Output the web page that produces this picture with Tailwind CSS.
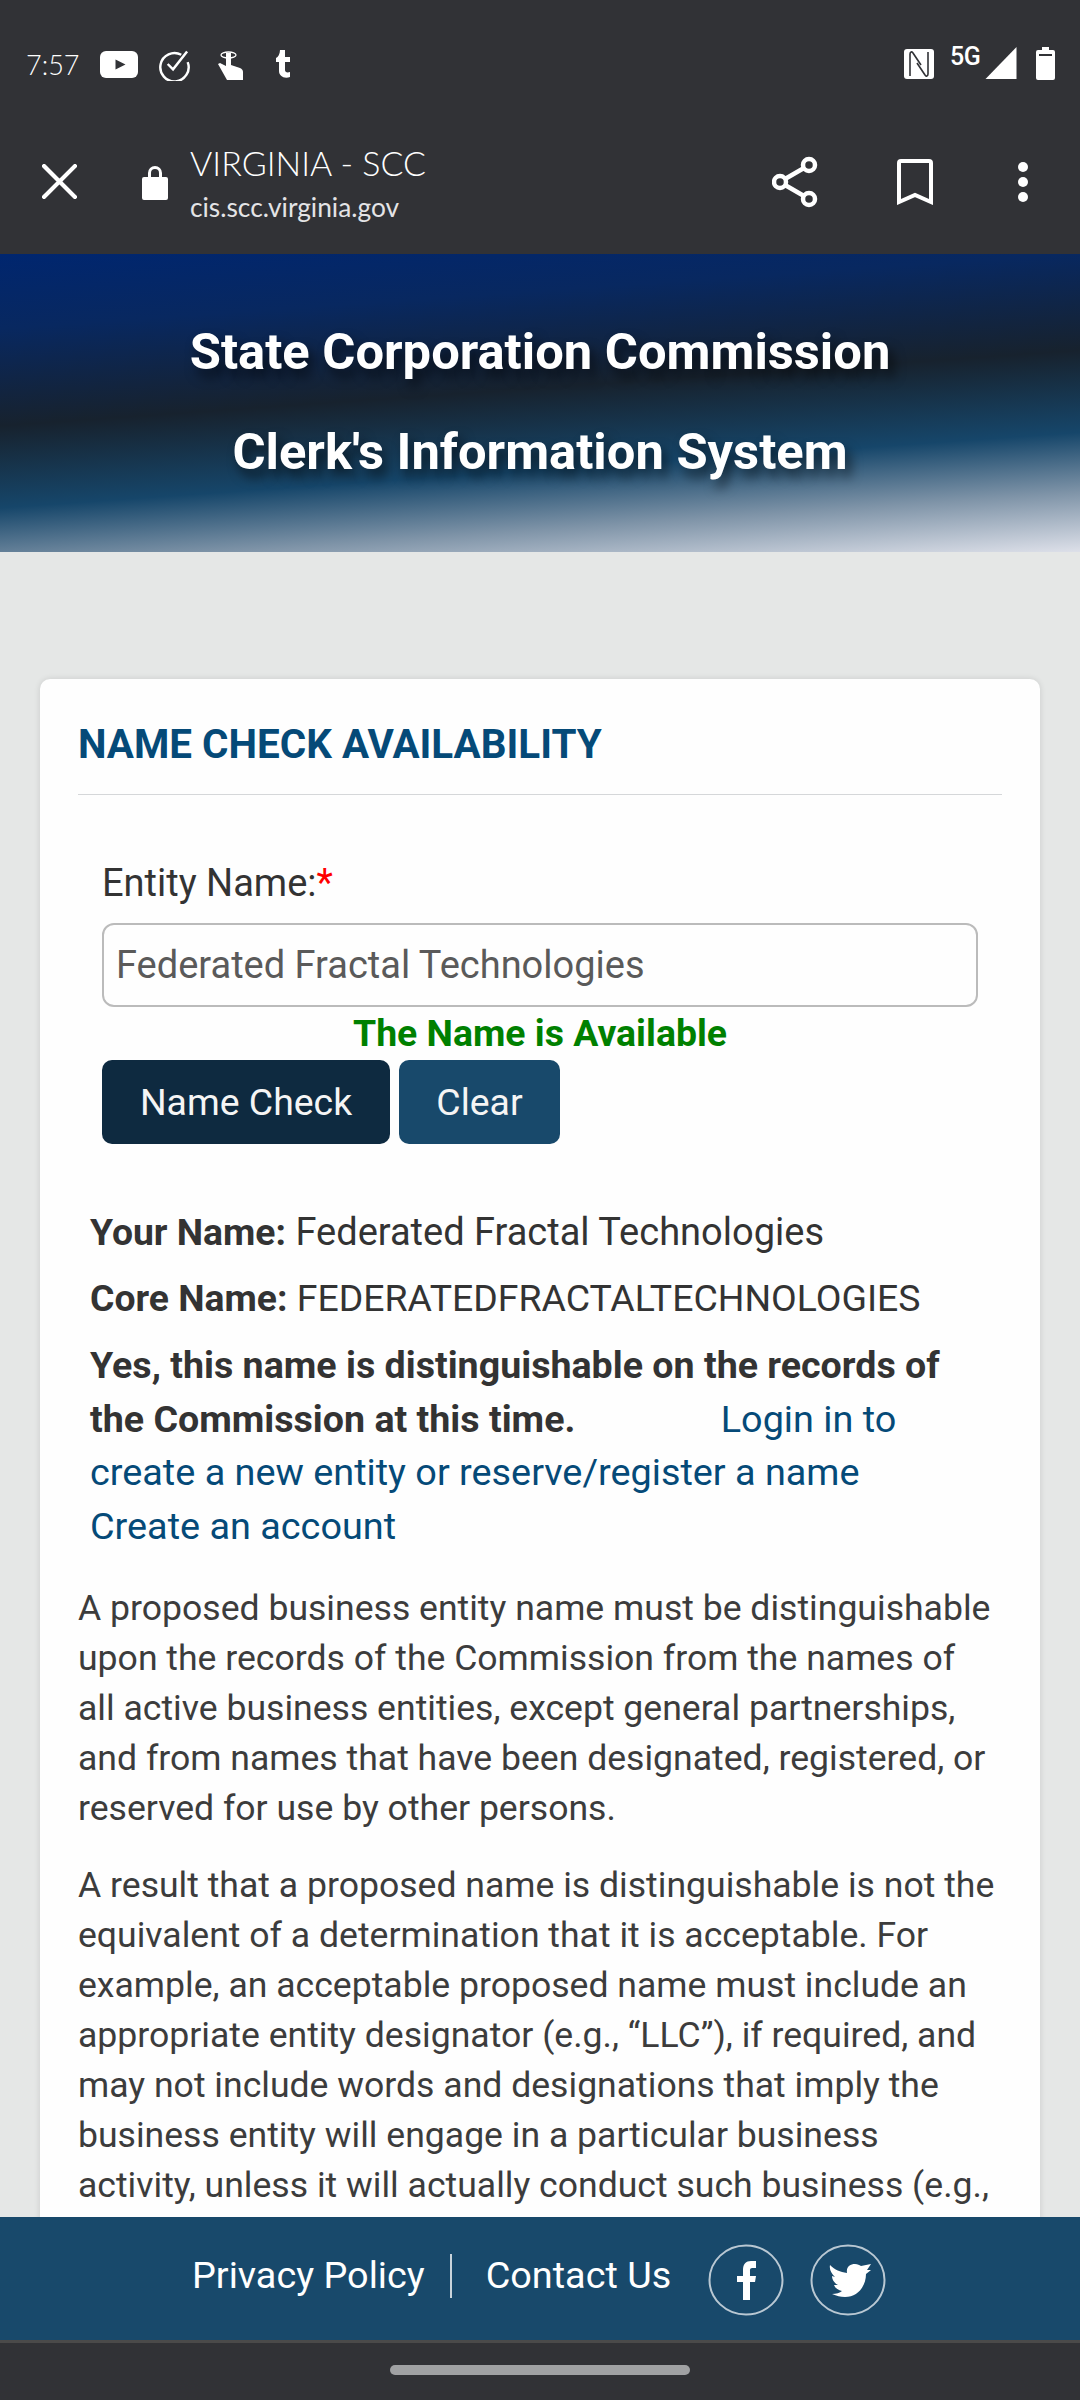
<!DOCTYPE html>
<html lang="en">
<head>
  <meta charset="UTF-8" />
  <meta name="viewport" content="width=device-width, initial-scale=1.0" />
  <title>Virginia SCC - Name Check</title>
  <script src="https://cdn.jsdelivr.net/npm/@tailwindcss/browser@4"></script>
</head>
<body class="m-0 font-['Roboto',sans-serif]">
  <div class="w-[1080px] h-[2400px] flex flex-col overflow-hidden bg-[#e5e7e6]">

    <!-- Status bar -->
    <div class="h-[126px] shrink-0 bg-[#313236] text-white flex items-start pt-[47px] pl-[26px] pr-[25px]">
      <span class="font-['Lato',sans-serif] font-light text-[27px] leading-[34px] w-[74px] mt-[1px]">7:57</span>
      <svg class="w-[38px] h-[27px] mt-[4px]" viewBox="0 0 38 27"><rect width="38" height="27" rx="6" fill="#fff"/><path d="M15.500 8.500l10 5-10 5z" fill="#313236"/></svg>
      <svg class="w-[32px] h-[33px] ml-[20px] mt-[1px]" viewBox="0 0 33 33" fill="none" stroke="#fff" stroke-width="2.500"><path d="M24 6.500A14.600 14.600 0 1 0 30.600 14"/><path d="M10 16l5.500 5.500L30 3"/></svg>
      <svg class="w-[26px] h-[30px] ml-[28px] mt-[3px]" viewBox="0 0 26 30" fill="#fff"><path d="M8 3h5v12l9 3c2 1 3 2 3 4v8H9L0 14l2-1 6 3z"/><ellipse cx="10.500" cy="5" rx="7.500" ry="3" fill="none" stroke="#fff" stroke-width="1.300"/></svg>
      <svg class="w-[15px] h-[28px] ml-[32px] mt-[3px]" viewBox="0 0 15 28" fill="#fff"><path d="M4 0h5v7h5v5H9v8c0 2 2 3 5 2v5c-6 2-11-1-11-6v-9H0V8c2-1 4-4 4-8z"/></svg>
      <div class="flex-1"></div>
      <svg class="w-[30px] h-[30px] mt-[2px]" viewBox="0 0 30 30"><rect width="30" height="30" rx="3" fill="#fff"/><path d="M6 27V5c0-2 2-3 3-1l8 12M24 3v22c0 2-2 3-3 1l-8-12" fill="none" stroke="#313236" stroke-width="1.600"/></svg>
      <span class="text-[25px] leading-[20px] font-medium w-[28px] ml-[16px] tracking-[-0.5px]">5G</span>
      <svg class="w-[32px] h-[32px] ml-[7px]" viewBox="0 0 31 32" fill="#fff"><path d="M31 0v32H0z"/></svg>
      <svg class="w-[19px] h-[33px] ml-[19px]" viewBox="0 0 19 33" fill="#fff"><path fill-rule="evenodd" d="M6 0h7v3h4a2 2 0 0 1 2 2v26a2 2 0 0 1-2 2H2a2 2 0 0 1-2-2V5a2 2 0 0 1 2-2h4zM3 7v2h13V7z"/></svg>
    </div>

    <!-- Browser toolbar -->
    <div class="h-[128px] shrink-0 bg-[#313236] text-white flex items-center pl-[42px] pr-[52px]">
      <svg class="w-[35px] h-[35px] -mt-[17px]" viewBox="0 0 34 34" stroke="#fff" stroke-width="4" stroke-linecap="square"><path d="M2 2l30 30M32 2L2 32"/></svg>
      <svg class="w-[28px] h-[36px] ml-[64px] -mt-[16px]" viewBox="0 0 26 36" fill="#fff"><path d="M6 13V9a7 7 0 0 1 14 0v4h4a2 2 0 0 1 2 2v19a2 2 0 0 1-2 2H2a2 2 0 0 1-2-2V15a2 2 0 0 1 2-2zm3 0h8V9a4 4 0 0 0-8 0z"/></svg>
      <div class="ml-[21px] -mt-[16px] font-['Lato',sans-serif] font-light flex flex-col">
        <span class="text-[34px] leading-[40px] mt-[3px]">VIRGINIA - SCC</span>
        <span class="text-[26.300px] leading-[36px] mt-[6px] font-normal text-[#e4e4e6]">cis.scc.virginia.gov</span>
      </div>
      <div class="flex-1"></div>
      <svg class="w-[46px] h-[52px] -mt-[16px]" viewBox="0 0 46 52" fill="none" stroke="#fff" stroke-width="4.500"><circle cx="37" cy="9" r="6"/><circle cx="8" cy="26" r="6"/><circle cx="37" cy="43" r="6"/><path d="M13 23l19-11M13 29l19 11"/></svg>
      <svg class="w-[36px] h-[46px] ml-[79px] -mt-[16px]" viewBox="0 0 36 46" fill="none" stroke="#fff" stroke-width="4"><path d="M2 43V4a2 2 0 0 1 2-2h28a2 2 0 0 1 2 2v39L18 36z"/></svg>
      <svg class="w-[10px] h-[40px] ml-[85px] -mt-[16px]" viewBox="0 0 10 40" fill="#fff"><circle cx="5" cy="5" r="5"/><circle cx="5" cy="20" r="5"/><circle cx="5" cy="35" r="5"/></svg>
    </div>

    <!-- Banner -->
    <header class="h-[298px] shrink-0 pt-[48px] text-center text-white font-bold text-[50.700px] leading-[100px] bg-[linear-gradient(176deg,#00266f_0%,#082860_20%,#17222e_46%,#16466a_68%,#7f94a8_84%,#dde0e9_100%)] [text-shadow:5px_8px_12px_rgba(0,0,0,0.6)]">
      <div>State Corporation Commission</div>
      <div>Clerk's Information System</div>
    </header>

    <!-- Page body -->
    <main class="flex-1 min-h-0 overflow-hidden pt-[127px] px-[40px]">
      <section class="bg-[#fefefe] rounded-[10px] shadow-[0_0_6px_rgba(0,0,0,0.12)] px-[38px] pt-[38px] pb-[40px] text-[#333333] text-[35.600px] leading-[50px]">
        <h2 class="text-[40.400px] leading-[56px] font-bold text-[#054a78] pb-[21px] border-b border-[#d5d7d9]">NAME CHECK AVAILABILITY</h2>

        <form class="px-[24px] pt-[63px]">
          <label class="block text-[38px] leading-[50px]">Entity Name:<span class="text-[#ff0000]">*</span></label>
          <div class="mt-[15px] h-[84px] border-2 border-[#bbbbbb] rounded-[12px] flex items-center px-[12px] text-[38px] text-[#5a5a5a]">Federated Fractal Technologies</div>
          <p class="text-center font-bold text-[#008000] text-[37.400px] leading-[50px] mt-[1px]">The Name is Available</p>
          <div class="flex gap-[9px] mt-[2px]">
            <button type="button" class="w-[288px] h-[84px] rounded-[10px] bg-[#0e2a40] text-[#f5f5f5] text-[37.400px]">Name Check</button>
            <button type="button" class="w-[161px] h-[84px] rounded-[10px] bg-[#18496b] text-[#f5f5f5] text-[37.400px]">Clear</button>
          </div>
        </form>

        <div class="px-[12px] mt-[62px] text-[38px] leading-[53.500px]">
          <p class="mb-[12px]"><b class="text-[37.300px]">Your Name:</b> Federated Fractal Technologies</p>
          <p class="mb-[14px]"><b class="text-[37.300px]">Core Name:</b> <span class="text-[37.400px]">FEDERATEDFRACTALTECHNOLOGIES</span></p>
          <p class="text-[37.800px]"><b class="text-[37.600px]">Yes, this name is distinguishable on the records of the Commission at this time.</b><span class="inline-block w-[136px]"></span> <a class="text-[#054a78]">Login in to create a new entity or reserve/register a name</a><br><a class="text-[#054a78]">Create an account</a></p>
        </div>

        <div class="pr-[4px] text-[#3c3c3c]">
          <p class="mt-[30px]">A proposed business entity name must be distinguishable upon the records of the Commission from the names of all active business entities, except general partnerships, and from names that have been designated, registered, or reserved for use by other persons.</p>
          <p class="mt-[27px]">A result that a proposed name is distinguishable is not the equivalent of a determination that it is acceptable. For example, an acceptable proposed name must include an appropriate entity designator (e.g., “LLC”), if required, and may not include words and designations that imply the business entity will engage in a particular business activity, unless it will actually conduct such business (e.g.,</p>
        </div>
      </section>
    </main>

    <!-- Footer -->
    <footer class="h-[123px] shrink-0 bg-[#18496b] text-white text-[37.800px] flex items-center pl-[192px] pb-[6px]">
      <a>Privacy Policy</a>
      <span class="w-[2px] h-[44px] bg-[#c9d3da] ml-[25px] mr-[34px]"></span>
      <a>Contact Us</a>
      <svg class="w-[76px] h-[72px] ml-[37px] mt-[8px]" viewBox="0 0 76 72" fill="none"><ellipse cx="38" cy="36" rx="36.500" ry="34.500" stroke="#b9c8d3" stroke-width="2"/><path d="M35 56V38h-6v-6h6v-6c0-6 3-9 8-9h5v7h-3c-3 0-3 1-3 3v5h6l-1 6h-5v18z" fill="#fff"/></svg>
      <svg class="w-[76px] h-[72px] ml-[26px] mt-[8px]" viewBox="0 0 76 72" fill="none"><ellipse cx="38" cy="36" rx="36.500" ry="34.500" stroke="#b9c8d3" stroke-width="2"/><path d="M20 21c5 5 10 7 17 8-1-6 3-9 8-9 3 0 4 1 6 2l10-2-4 6 4 0-5 4c0 12-8 23-21 23-5 0-8-1-13-3 4 0 8-1 10-3-4-1-7-3-8-6h4c-4-2-6-6-6-9l3 1c-3-3-6-7-5-12z" fill="#fff"/></svg>
    </footer>

    <!-- Nav bar -->
    <div class="h-[60px] shrink-0 bg-[#313236] border-t-[3px] border-[#4a4a4a] flex justify-center pt-[22px]">
      <div class="w-[300px] h-[10px] rounded-full bg-[#a0a1a3]"></div>
    </div>
  </div>
</body>
</html>
